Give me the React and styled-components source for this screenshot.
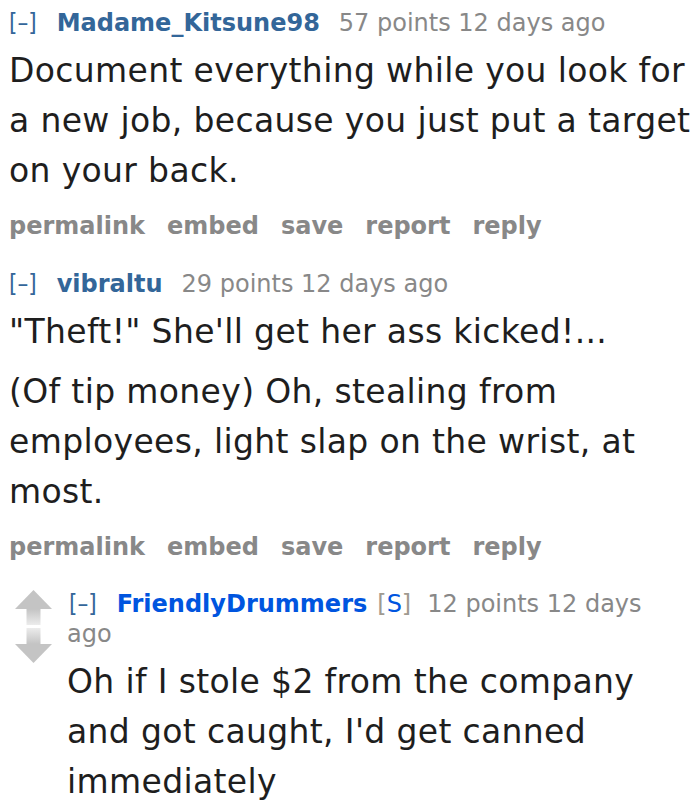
import styled, { createGlobalStyle } from "styled-components";

const GlobalStyle = createGlobalStyle`
  html, body {
    margin: 0;
    padding: 0;
    background: #ffffff;
  }
  body {
    font-family: "DejaVu Sans", Verdana, sans-serif;
    color: #222222;
  }
`;

const Page = styled.div`
  width: 700px;
  padding: 8px 0 0 9px;
  box-sizing: border-box;
`;

const CommentWrap = styled.div`
  display: flex;
  align-items: flex-start;
  gap: 15px;
  margin-top: ${(p) => p.$top || 0}px;
  padding-left: ${(p) => (p.$child ? 6 : 0)}px;
  padding-right: ${(p) => (p.$child ? 14 : 0)}px;
`;

const Midcol = styled.div`
  width: 37px;
  display: flex;
  flex-direction: column;
  align-items: center;
  gap: 3px;
  padding-top: 1px;
  flex-shrink: 0;
`;

const Entry = styled.div`
  flex: 1;
  min-width: 0;
`;

const Tagline = styled.div`
  font-size: 24px;
  line-height: 30px;
  color: #888888;
`;

const Expand = styled.span`
  font-family: "DejaVu Sans Condensed", "DejaVu Sans", sans-serif;
  color: #336699;
  margin-left: ${(p) => (p.$child ? 2 : 0)}px;
  margin-right: 20px;
`;

const Author = styled.span`
  font-weight: bold;
  font-size: 24px;
  color: ${(p) => (p.$submitter ? "#0055df" : "#336699")};
  margin-right: ${(p) => (p.$submitter ? 10 : 19)}px;
`;

const Flair = styled.span`
  color: #a09a90;
  margin-right: 16px;

  b {
    font-weight: normal;
    color: #0055df;
  }
`;

const Time = styled.time`
  color: #888888;
`;

const Body = styled.div`
  margin-top: 8px;
  font-size: 33px;
  letter-spacing: 0.35px;
  line-height: 50px;
  color: #1e1e1e;
`;

const Para = styled.p`
  margin: 0 0 10px 0;
  &:last-child {
    margin-bottom: 0;
  }
`;

const Buttons = styled.ul`
  list-style: none;
  margin: 15px 0 0 0;
  padding: 0;
  display: flex;
  gap: 22px;
  font-weight: bold;
  font-size: 24px;
  line-height: 30px;
  color: #888888;
`;

const Arrow = ({ down }) => {
  const id = down ? "stemDown" : "stemUp";
  return (
    <svg
      width="37"
      height="35"
      viewBox="0 0 37 35"
      style={down ? { transform: "rotate(180deg)" } : undefined}
    >
      <defs>
        <linearGradient id={id} x1="0" y1="0" x2="0" y2="1">
          <stop offset="0" stopColor="#c4c4c4" />
          <stop offset="1" stopColor="#ececec" />
        </linearGradient>
      </defs>
      <polygon points="18.5,0 37,19 0,19" fill="#c4c4c4" />
      <rect x="11.5" y="19" width="14" height="16" fill={`url(#${id})`} />
    </svg>
  );
};

const Comment = ({ author, submitter, points, time, paragraphs, top, child }) => (
  <CommentWrap $top={top} $child={child}>
    {child && (
      <Midcol>
        <Arrow />
        <Arrow down />
      </Midcol>
    )}
    <Entry>
      <Tagline>
        <Expand $child={child}>[–]</Expand>
        <Author $submitter={submitter}>{author}</Author>
        {submitter && (
          <Flair>
            [<b>S</b>]
          </Flair>
        )}
        {points} points <Time>{time}</Time>
      </Tagline>
      <Body>
        {paragraphs.map((t, i) => (
          <Para key={i}>{t}</Para>
        ))}
      </Body>
      {!child && (
        <Buttons>
          <li>permalink</li>
          <li>embed</li>
          <li>save</li>
          <li>report</li>
          <li>reply</li>
        </Buttons>
      )}
    </Entry>
  </CommentWrap>
);

export default function App() {
  return (
    <>
      <GlobalStyle />
      <Page>
        <Comment
          author="Madame_Kitsune98"
          points={57}
          time="12 days ago"
          paragraphs={[
            "Document everything while you look for a new job, because you just put a target on your back.",
          ]}
        />
        <Comment
          top={28}
          author="vibraltu"
          points={29}
          time="12 days ago"
          paragraphs={[
            "\"Theft!\" She'll get her ass kicked!...",
            "(Of tip money) Oh, stealing from employees, light slap on the wrist, at most.",
          ]}
        />
        <Comment
          top={27}
          child
          author="FriendlyDrummers"
          submitter
          points={12}
          time="12 days ago"
          paragraphs={[
            "Oh if I stole $2 from the company and got caught, I'd get canned immediately",
          ]}
        />
      </Page>
    </>
  );
}
